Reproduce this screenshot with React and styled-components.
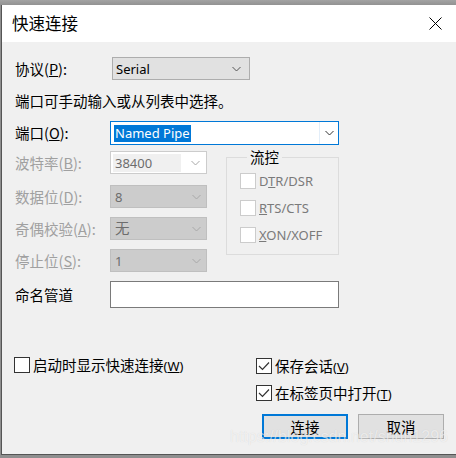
import React from "react";
import styled, { createGlobalStyle } from "styled-components";

const GlobalStyle = createGlobalStyle`
  html, body {
    margin: 0;
    padding: 0;
    background: #8f8f8f;
  }
  body {
    font-family: "Noto Sans CJK SC", "Noto Sans", sans-serif;
    font-size: 14.5px;
    color: #000;
  }
`;

const Screen = styled.div`
  width: 456px;
  height: 458px;
  overflow: hidden;
  position: relative;
  background: linear-gradient(#a3a3a3, #8f8f8f 6px);
`;

const Window = styled.div`
  margin: 5px 0 0 1px;
  width: 455px;
  border-left: 1px solid #555;
  border-bottom: 1px solid #555;
  box-sizing: border-box;
  background: #f0f0f0;
`;

const TitleBar = styled.div`
  height: 37px;
  background: #fff;
  display: flex;
  align-items: center;
  justify-content: space-between;
  padding: 0 14px 0 10px;
`;

const Title = styled.div`
  font-size: 16.5px;
  line-height: 20px;
  margin-top: -2px;
`;

const Body = styled.div`
  height: 412px;
  box-sizing: border-box;
  padding: 15px 12px 0 12px;
  display: flex;
  flex-direction: column;
`;

const Row = styled.div`
  display: flex;
  align-items: center;
  height: ${(p) => p.$h || 23}px;
  margin-top: ${(p) => p.$mt || 0}px;
`;

const Label = styled.div`
  width: ${(p) => p.$w || 96}px;
  flex: none;
  box-sizing: border-box;
  padding-left: 1px;
  white-space: nowrap;
  color: ${(p) => (p.$disabled ? "#a0a0a0" : "#000")};
  line-height: 20px;
`;

const Hint = styled.div`
  line-height: 20px;
  margin-top: 11px;
  padding-left: 1px;
`;

const Combo = styled.div`
  width: ${(p) => p.$w}px;
  height: ${(p) => p.$h || 23}px;
  box-sizing: border-box;
  border: 1px solid ${(p) => p.$border};
  background: ${(p) => p.$bg};
  display: flex;
  align-items: center;
  position: relative;
  font-family: "Noto Sans", sans-serif;
  font-size: 13px;
  color: ${(p) => p.$color || "#000"};
`;

const ComboText = styled.div`
  flex: 1;
  padding-left: ${(p) => p.$pl || 3}px;
  line-height: 18px;
  white-space: nowrap;
`;

const EditArea = styled.div`
  width: 71px;
  height: 18px;
  margin-left: 2px;
  background: #f0f0f0;
  padding-left: 2px;
  line-height: 18px;
  box-sizing: border-box;
`;

const CjkValue = styled.span`
  font-family: "Noto Sans CJK SC", sans-serif;
  font-size: 14.5px;
`;

const ChevronBox = styled.div`
  width: ${(p) => p.$w || 20}px;
  height: 100%;
  flex: none;
  display: flex;
  align-items: center;
  justify-content: center;
  border-left: ${(p) => (p.$sep ? "1px solid #e3eef9" : "none")};
  box-sizing: border-box;
`;

const Chevron = ({ color = "#444" }) => (
  <svg width="9" height="6" viewBox="0 0 9 6">
    <path d="M0.5 1 L4.5 5 L8.5 1" fill="none" stroke={color} strokeWidth="1" />
  </svg>
);

const Selected = styled.span`
  background: #0078d7;
  color: #fff;
  padding: 0 1px;
  line-height: 17px;
  display: inline-block;
`;

const MidBlock = styled.div`
  display: flex;
  align-items: flex-start;
  margin-top: 2px;
`;

const LeftCol = styled.div`
  margin-top: 4px;
  width: 193px;
  display: flex;
  flex-direction: column;
`;

const GroupBox = styled.fieldset`
  margin: 0 0 0 19px;
  padding: 6px 0 11px 13px;
  width: 113px;
  box-sizing: border-box;
  border: 1px solid #dcdcdc;
  display: flex;
  flex-direction: column;
  gap: 11px;
  min-width: 0;
`;

const Legend = styled.legend`
  margin-left: 7px;
  padding: 0 3px;
  line-height: 20px;
  font-size: 14.5px;
`;

const CheckRow = styled.label`
  display: flex;
  align-items: center;
  height: 16px;
  margin-top: ${(p) => p.$mt || 0}px;
  white-space: nowrap;
`;

const Box = styled.span`
  width: 16px;
  height: 16px;
  flex: none;
  box-sizing: border-box;
  background: #fff;
  border: 1px solid ${(p) => (p.$disabled ? "#cccccc" : "#333")};
  display: flex;
  align-items: center;
  justify-content: center;
  margin-right: ${(p) => p.$gap || 3}px;
`;

const CheckText = styled.span`
  line-height: 20px;
  color: ${(p) => (p.$disabled ? "#7a7a7a" : "#000")};
  font-family: ${(p) =>
    p.$latin ? `"Noto Sans", sans-serif` : `"Noto Sans CJK SC", sans-serif`};
  font-size: ${(p) => (p.$latin ? 13 : 14.5)}px;
`;

const Key = styled.span`
  font-size: 13px;
  font-family: "Noto Sans", sans-serif;
`;

const TextInput = styled.div`
  width: 229px;
  height: 27px;
  box-sizing: border-box;
  border: 1px solid #7a7a7a;
  background: #fff;
`;

const Footer = styled.div`
  display: flex;
  justify-content: space-between;
  align-items: flex-start;
  margin-top: 49px;
`;

const RightCol = styled.div`
  width: 188px;
  margin-top: 1px;
  display: flex;
  flex-direction: column;
`;

const ButtonRow = styled.div`
  display: flex;
  justify-content: flex-end;
  gap: 10px;
  margin-top: 13px;
`;

const Button = styled.button`
  width: 86px;
  height: 25px;
  box-sizing: border-box;
  background: #e1e1e1;
  border: ${(p) => (p.$primary ? "2px solid #0078d7" : "1px solid #adadad")};
  font-family: "Noto Sans CJK SC", sans-serif;
  font-size: 14.5px;
  color: #000;
  padding: 0;
  line-height: 20px;
`;

const Watermark = styled.div`
  position: absolute;
  left: 230px;
  top: 428px;
  font-family: "Liberation Sans", Arial, sans-serif;
  font-size: 16px;
  line-height: 18px;
  color: rgba(255, 255, 255, 0.62);
  text-shadow: 0 0 1px rgba(0, 0, 0, 0.12);
  pointer-events: none;
  white-space: nowrap;
`;

const Check = () => (
  <svg width="12" height="10" viewBox="0 0 12 10">
    <path d="M1 5 L4.5 8.5 L11 1.5" fill="none" stroke="#333" strokeWidth="1.2" />
  </svg>
);

const CloseIcon = () => (
  <svg width="13" height="13" viewBox="0 0 13 13">
    <path d="M0.5 0.5 L12.5 12.5 M12.5 0.5 L0.5 12.5" stroke="#000" strokeWidth="1" />
  </svg>
);

const CheckItem = ({ checked, disabled, latin, children, mt, gap }) => (
  <CheckRow $mt={mt}>
    <Box $disabled={disabled} $gap={gap}>{checked && <Check />}</Box>
    <CheckText $disabled={disabled} $latin={latin}>
      {children}
    </CheckText>
  </CheckRow>
);

const DisabledCombo = ({ children }) => (
  <Combo $w={97} $bg="#cccccc" $border="#bfbfbf" $color="#6d6d6d">
    <ComboText $pl={4}>{children}</ComboText>
    <ChevronBox>
      <Chevron color="#a8a8a8" />
    </ChevronBox>
  </Combo>
);

export default function App() {
  return (
    <Screen>
      <GlobalStyle />
      <Window>
        <TitleBar>
          <Title>快速连接</Title>
          <CloseIcon />
        </TitleBar>
        <Body>
          <Row>
            <Label $w={98}>
              协议(<u>P</u>):
            </Label>
            <Combo $w={138} $bg="#e1e1e1" $border="#adadad">
              <ComboText>Serial</ComboText>
              <ChevronBox $w={26}>
                <Chevron color="#555" />
              </ChevronBox>
            </Combo>
          </Row>

          <Hint>端口可手动输入或从列表中选择。</Hint>

          <Row $mt={10} $h={24}>
            <Label>
              端口(<u>O</u>):
            </Label>
            <Combo $w={229} $h={24} $bg="#fff" $border="#0078d7">
              <ComboText $pl={3}>
                <Selected>Named Pipe</Selected>
              </ComboText>
              <ChevronBox $w={19} $sep>
                <Chevron color="#333" />
              </ChevronBox>
            </Combo>
          </Row>

          <MidBlock>
            <LeftCol>
              <Row>
                <Label $disabled>
                  波特率(<u>B</u>):
                </Label>
                <Combo $w={97} $bg="#fff" $border="#cccccc" $color="#6d6d6d">
                  <EditArea>38400</EditArea>
                  <ComboText />
                  <ChevronBox $w={22}>
                    <Chevron color="#a8a8a8" />
                  </ChevronBox>
                </Combo>
              </Row>
              <Row $mt={11}>
                <Label $disabled>
                  数据位(<u>D</u>):
                </Label>
                <DisabledCombo>8</DisabledCombo>
              </Row>
              <Row $mt={9}>
                <Label $disabled>
                  奇偶校验(<u>A</u>):
                </Label>
                <DisabledCombo>
                  <CjkValue>无</CjkValue>
                </DisabledCombo>
              </Row>
              <Row $mt={9}>
                <Label $disabled>
                  停止位(<u>S</u>):
                </Label>
                <DisabledCombo>1</DisabledCombo>
              </Row>
            </LeftCol>

            <GroupBox>
              <Legend>流控</Legend>
              <CheckItem disabled latin>
                D<u>T</u>R/DSR
              </CheckItem>
              <CheckItem disabled latin>
                <u>R</u>TS/CTS
              </CheckItem>
              <CheckItem disabled latin>
                <u>X</u>ON/XOFF
              </CheckItem>
            </GroupBox>
          </MidBlock>

          <Row $mt={9} $h={27}>
            <Label>命名管道</Label>
            <TextInput />
          </Row>

          <Footer>
            <CheckItem>
              启动时显示快速连接<Key>(<u>W</u>)</Key>
            </CheckItem>
            <RightCol>
              <CheckItem checked>
                保存会话<Key>(<u>V</u>)</Key>
              </CheckItem>
              <CheckItem checked mt={11}>
                在标签页中打开<Key>(<u>T</u>)</Key>
              </CheckItem>
              <ButtonRow>
                <Button $primary>连接</Button>
                <Button>取消</Button>
              </ButtonRow>
            </RightCol>
          </Footer>
        </Body>
      </Window>
      <Watermark>https://blog.csdn.net/shun1296</Watermark>
    </Screen>
  );
}
